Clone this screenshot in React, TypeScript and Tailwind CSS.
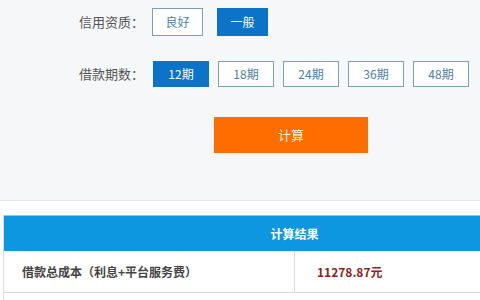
const credit = ['良好', '一般'];
const periods = ['12期', '18期', '24期', '36期', '48期'];

function Option({ label, active, w }: { label: string; active: boolean; w: string }) {
  return (
    <button
      className={
        active
          ? `${w} flex items-center justify-center border border-[#0b74c9] bg-[#0b74c9] text-[12px] text-white`
          : `${w} flex items-center justify-center border border-[#7c9fb2] bg-white text-[12px] text-[#4d7ea6]`
      }
    >
      {label}
    </button>
  );
}

export default function App() {
  return (
    <div
      className="h-[300px] w-[480px] overflow-hidden bg-[#f6f7f9]"
      style={{ fontFamily: '"Noto Sans CJK SC", "Noto Sans", sans-serif' }}
    >
      <div className="h-[200px] pt-[8px]">
        <div className="flex h-[28px] items-center">
          <div className="w-[144px] text-right text-[13px] text-[#555]">信用资质：</div>
          <div className="ml-[8px] flex h-full gap-[14px]">
            {credit.map((c, i) => (
              <Option key={c} label={c} active={i === 1} w="w-[51px] h-full" />
            ))}
          </div>
        </div>
        <div className="mt-[25px] flex h-[26px] items-center">
          <div className="w-[144px] text-right text-[13px] text-[#555]">借款期数：</div>
          <div className="ml-[9px] flex h-full gap-[9px]">
            {periods.map((p, i) => (
              <Option key={p} label={p} active={i === 0} w="w-[56px] h-full" />
            ))}
          </div>
        </div>
        <button className="ml-[214px] mt-[30px] flex h-[36px] w-[154px] items-center justify-center bg-[#ff6c00] text-[13px] text-[#fff3dc]">
          计算
        </button>
      </div>

      <div className="border-t border-[#e3e4e6] bg-white pl-[3px] pt-[14px]">
        <div className="w-[582px] border-l border-[#d9d9d9]">
          <div className="flex h-[36px] items-center justify-center border-t border-[#8cc9ea] bg-[#0d97e0] text-[12px] font-bold text-white">
            计算结果
          </div>
          <div className="flex h-[42px] border-b border-[#d9d9d9]">
            <div className="flex w-[291px] items-center border-r border-[#d9d9d9] pl-[18px] text-[12px] font-bold text-[#444]">
              借款总成本（利息+平台服务费）
            </div>
            <div className="flex flex-1 items-center pl-[22px] text-[12px] font-bold text-[#8e1f24]">
              11278.87元
            </div>
          </div>
          <div className="h-[42px]"></div>
        </div>
      </div>
    </div>
  );
}
